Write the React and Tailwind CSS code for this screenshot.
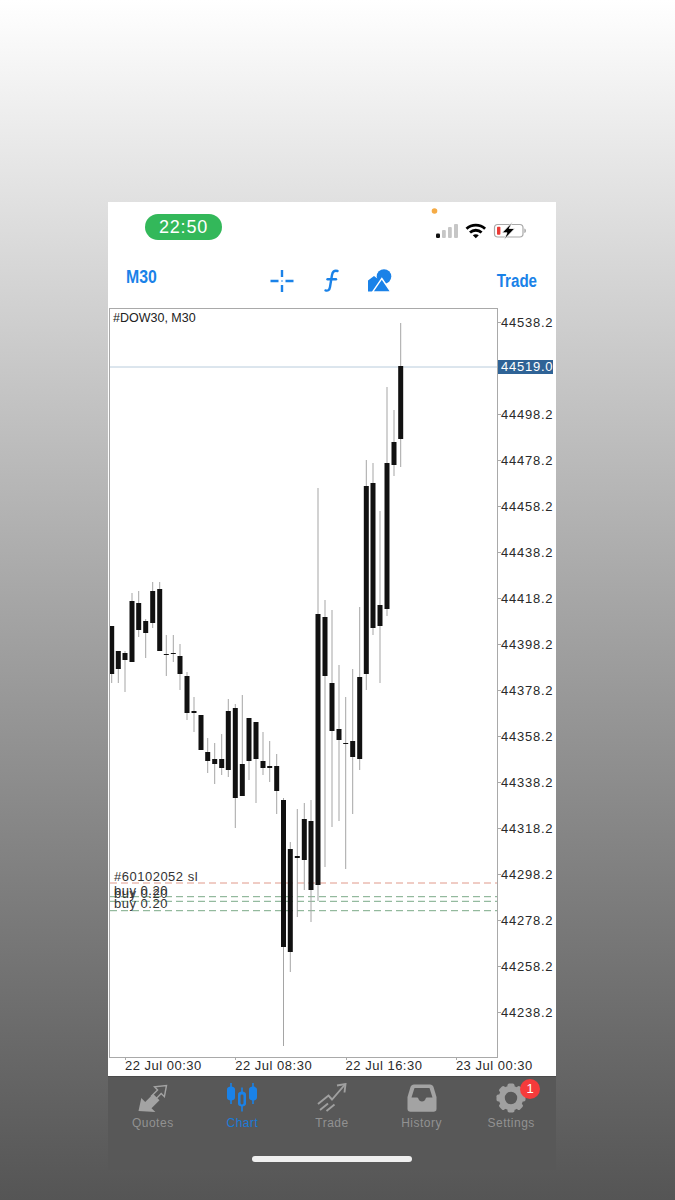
const candles = [
  [111.7, 626, 626, 674, 683],
  [118.3, 651, 651, 669, 683],
  [125, 651, 653, 660, 692],
  [132, 593, 601, 662, 662],
  [138.7, 591, 603, 630, 637],
  [145.7, 619, 621, 633, 658],
  [152.7, 582, 591, 623, 628],
  [159.7, 582, 589, 651, 651],
  [166.3, 635, 654, 655, 676],
  [173.3, 635, 653, 653.5, 662],
  [180, 644, 656, 674, 690],
  [187, 672, 676, 713, 720],
  [194, 697, 711, 713, 732],
  [201, 715, 715, 750, 750],
  [207.7, 738, 752, 761, 773],
  [214.7, 743, 759, 764, 784],
  [221.7, 734, 759, 768, 775],
  [228.3, 699, 711, 770, 777],
  [235.3, 704, 708, 798, 828],
  [242.3, 695, 764, 796, 796],
  [249, 718, 718, 761, 780],
  [256, 722, 722, 759, 803],
  [263, 732, 761, 768, 775],
  [269.7, 741, 766, 768, 782],
  [276.7, 754, 766, 791, 814],
  [283.5, 798, 800, 947, 1046],
  [290.3, 842, 849, 952, 972],
  [297.3, 809, 856, 858, 917],
  [304.3, 803, 819, 860, 890],
  [311, 800, 821, 890, 922],
  [318, 488, 614, 885, 901],
  [325, 600, 617, 676, 867],
  [332, 610, 683, 731, 827],
  [339, 665, 729, 740, 821],
  [345.7, 697, 743, 743.5, 869],
  [352.7, 669, 741, 757, 814],
  [359.7, 607, 677, 759, 770],
  [366.3, 460, 486, 674, 690],
  [373, 463, 483, 628, 635],
  [380, 511, 605, 626, 683],
  [387, 387, 463, 609, 616],
  [394, 410, 442, 465, 476],
  [400.7, 323, 366, 439, 467],
];

const prices = ["44538.2", "", "44498.2", "44478.2", "44458.2", "44438.2", "44418.2", "44398.2", "44378.2", "44358.2", "44338.2", "44318.2", "44298.2", "44278.2", "44258.2", "44238.2"];
const dates = ["22 Jul 00:30", "22 Jul 08:30", "22 Jul 16:30", "23 Jul 00:30"];
const levels = [
  [883, "#e0998a"],
  [896.7, "#7aa987"],
  [901.3, "#7aa987"],
  [910.7, "#7aa987"],
];

function StatusIcons() {
  return (
    <svg width="110" height="36" viewBox="0 0 110 36">
      <circle cx="9.500" cy="6" r="2.800" fill="#f5ab45" />
      <rect x="11" y="28.500" width="4" height="4.500" rx="1.200" fill="#111" />
      <rect x="17" y="25" width="3.800" height="8" rx="1" fill="#c6c6c6" />
      <rect x="23" y="22" width="3.800" height="11" rx="1" fill="#c6c6c6" />
      <rect x="29" y="19" width="4" height="14" rx="1" fill="#c6c6c6" />
      <g fill="none" stroke="#000" strokeWidth="2.800">
        <path d="M41.500 23.800c5.200-4.800 13.400-4.800 18.600 0" />
        <path d="M45 27.500c3.300-3 8.300-3 11.600 0" />
      </g>
      <path d="M47.800 30.300l3 2.900 3-2.900c-1.700-1.500-4.300-1.500-6 0z" fill="#000" />
      <rect x="69.500" y="19.500" width="28.500" height="12.500" rx="3.200" fill="none" stroke="#a8a8a8" strokeWidth="1.200" />
      <rect x="72" y="21.800" width="3.400" height="8" rx="0.800" fill="#ea3b36" />
      <path d="M99.500 23.500v4.500c.8-.3 1.200-1.100 1.200-2.200s-.4-2-1.200-2.300z" fill="#888" />
      <path d="M87.500 17l-10.500 10.800h5l-2.800 6.700 10.600-11h-5.600z" fill="#000" stroke="#fff" strokeWidth="0.800" />
    </svg>
  );
}

function ToolIcons() {
  return (
    <div className="flex items-center gap-[25px]">
      <svg width="24" height="24" viewBox="0 0 24 24" fill="none" stroke="#1a82e8" strokeWidth="2.400">
        <path d="M0.500 12H8.500M15.500 12H23.500M12 1V8M12 16V23" />
        <path d="M12 11.200V12.800" strokeWidth="1.200" />
      </svg>
      <svg width="24" height="24" viewBox="0 0 24 24" fill="none" stroke="#1a82e8" strokeWidth="2.400" strokeLinecap="round">
        <path d="M18.500 2c-3.500-.9-5 .8-5.600 4.500l-1.900 11.500c-.5 3-2.100 4.200-4.500 3.400" />
        <path d="M8.500 10.200h8.500" />
      </svg>
      <svg width="24" height="24" viewBox="0 0 24 24" fill="#1a82e8">
        <path d="M0 11.500l6-4.500 6 4.500v11H0z" />
        <circle cx="16" cy="7.500" r="7.300" />
        <path d="M13.800 9.500l9.200 13.500H4.500z" stroke="#fff" strokeWidth="1.400" />
      </svg>
    </div>
  );
}

function QuotesIcon() {
  return (
    <svg width="30" height="30" viewBox="0 0 30 30">
      <path d="M0.500 28l2.800-13 3.900 3.900 8-8 6.300 6.300-8 8 3.900 3.900z" fill="#a3a3a3" />
      <path d="M28.500 2.500l-2.100 11.200-3.200-3.100-6.100 6.100-3.600-3.600 6.100-6.100-3.100-3.200z" fill="none" stroke="#a3a3a3" strokeWidth="1.400" />
    </svg>
  );
}

function ChartIcon() {
  return (
    <svg width="30" height="30" viewBox="0 0 30 30" fill="#1a82e8">
      <path d="M3.200 0h1.600v3.600c2 .4 3.200 1.300 3.200 3v8c0 1.700-1.200 2.600-3.200 3V21H3.200v-3.400c-2-.4-3.200-1.300-3.200-3v-8c0-1.700 1.200-2.600 3.200-3z" />
      <path d="M14.200 4.500h1.600v4c2 .4 3.200 1.300 3.200 3v9c0 1.700-1.200 2.600-3.200 3v5h-1.600v-5c-2-.4-3.200-1.300-3.200-3v-9c0-1.700 1.200-2.600 3.200-3z" />
      <rect x="13.500" y="11.500" width="3" height="10" rx="1.400" fill="#585858" />
      <path d="M25.200 0h1.600v3.600c2 .4 3.200 1.300 3.200 3v8c0 1.700-1.200 2.600-3.200 3V21h-1.600v-3.400c-2-.4-3.200-1.300-3.200-3v-8c0-1.700 1.200-2.600 3.200-3z" />
    </svg>
  );
}

function TradeIcon() {
  return (
    <svg width="30" height="30" viewBox="0 0 30 30" fill="none" stroke="#a0a0a0" strokeWidth="1.900">
      <path d="M1 21l10.500-8.500 3.500 4L28 1.500" />
      <path d="M20 2.500l8.500-1.500-1 8.500" />
      <path d="M3 27l8-6.500M9.500 28l8-6.500" />
    </svg>
  );
}

function HistoryIcon() {
  return (
    <svg width="30" height="30" viewBox="0 0 30 30">
      <path d="M7 1.500h16c1.700 0 3 1 3.500 2.600L29.500 14v12c0 1.700-1.200 2.800-3 2.800h-23c-1.800 0-3-1.100-3-2.800V14l3-9.900C4 2.500 5.300 1.500 7 1.500z" fill="#a3a3a3" />
      <path d="M7.500 5h15l3 9.500h-5.300c-1 0-1.400.6-1.700 1.400-.5 1.400-1.600 2.500-3.500 2.500s-3-1.100-3.500-2.500c-.3-.8-.7-1.400-1.700-1.400H4.500z" fill="#585858" />
    </svg>
  );
}

function SettingsIcon() {
  const teeth = [0, 45, 90, 135, 180, 225, 270, 315];
  return (
    <svg width="30" height="30" viewBox="0 0 30 30">
      {teeth.map((a) => (
        <rect key={a} x="11.500" y="0.500" width="7" height="7" rx="1.800" fill="#a0a0a0" transform={`rotate(${a} 15 15)`} />
      ))}
      <circle cx="15" cy="15" r="9.200" fill="none" stroke="#a0a0a0" strokeWidth="6" />
    </svg>
  );
}

function Tab({ icon, label, active, children }) {
  return (
    <div className="relative flex flex-1 flex-col items-center pt-[6px]">
      <div className="relative h-[30px] w-[30px]">
        {icon}
        {children}
      </div>
      <span className={`mt-[2px] text-[12px] leading-[16px] tracking-[0.5px] ${active ? "text-[#1a7bd8]" : "text-[#929292]"}`}>{label}</span>
    </div>
  );
}

export default function App() {
  return (
    <div
      className="h-[1200px] w-[675px] overflow-hidden bg-gradient-to-b from-[#ffffff] to-[#555555] pl-[108px] pt-[202px]"
      style={{ fontFamily: '"Liberation Sans", Arial, sans-serif' }}
    >
      <div className="flex h-[968px] w-[448px] flex-col bg-white">
        <div className="flex h-[48px] shrink-0 items-start justify-between pl-[37px] pr-[21px]">
          <div className="mt-[12px] flex h-[26px] w-[77px] items-center justify-center rounded-full bg-[#33b85a] text-[18px] tracking-[0.8px] text-white">22:50</div>
          <div className="mt-[3px]">
            <StatusIcons />
          </div>
        </div>

        <div className="flex h-[58px] shrink-0 items-center justify-between pl-[18px] pr-[19px]">
          <span className="mb-[5px] origin-left scale-x-[0.88] text-[18px] font-bold leading-[20px] text-[#1a82e8]">M30</span>
          <div className="ml-[13px] mt-[3px]">
            <ToolIcons />
          </div>
          <span className="origin-right scale-x-[0.84] pt-[3px] text-[18px] font-bold leading-[20px] text-[#1a82e8]">Trade</span>
        </div>

        <div className="flex h-[750px] shrink-0 pl-px">
          <div className="relative h-[750px] w-[389px] shrink-0 overflow-hidden border border-[#a9a9a9]">
            <svg width="387" height="748" viewBox="110 309 387 748" className="block">
              <line x1="110" x2="497" y1="367" y2="367" stroke="#b9ccdc" strokeWidth="1" />
              {levels.map(([y, c]) => (
                <line key={y} x1="110" x2="497" y1={y} y2={y} stroke={c} strokeWidth="1" strokeDasharray="7 4" />
              ))}
              {candles.map(([x, wt, bt, bb, wb]) => (
                <g key={x}>
                  <line x1={x} x2={x} y1={wt} y2={wb} stroke="#a5a5a5" strokeWidth="1" />
                  <rect x={x - 2.500} y={bt} width="5" height={Math.max(bb - bt, 1)} fill="#111111" />
                </g>
              ))}
            </svg>
            <span className="absolute left-[3px] top-[2px] text-[12.500px] leading-[15px] text-[#222]">#DOW30, M30</span>
            <span className="absolute left-[4px] top-[560px] text-[13px] leading-[15px] tracking-[0.5px] text-[#333]">#60102052 sl</span>
            <span className="absolute left-[4px] top-[574px] text-[13px] leading-[15px] tracking-[0.5px] text-[#333]">buy 0.20</span>
            <span className="absolute left-[4px] top-[577px] text-[13px] leading-[15px] tracking-[0.5px] text-[#333]">buy 0.20</span>
            <span className="absolute left-[4px] top-[587px] text-[13px] leading-[15px] tracking-[0.5px] text-[#333]">buy 0.20</span>
          </div>
          <div className="relative flex-1 pt-[6px]">
            {prices.map((p, i) => (
              <div key={i} className="flex h-[46px] items-start">
                <span className="mt-[8px] h-px w-[3px] bg-[#a9a9a9]" />
                <span className="pt-px text-[13px] leading-[16px] tracking-[0.75px] text-[#2a2a2a]">{p}</span>
              </div>
            ))}
            <div className="absolute left-0 top-[52px] flex h-[14px] w-[55px] items-center bg-[#2f6396] pl-[3px] text-[13px] leading-[14px] tracking-[0.75px] text-white">44519.0</div>
          </div>
        </div>

        <div className="flex h-[18px] shrink-0 pl-[17px]">
          {dates.map((d) => (
            <span key={d} className="relative w-[110.300px] shrink-0 text-[13px] leading-[16px] tracking-[0.5px] text-[#2a2a2a]">
              {d}
              <i className="absolute left-0 top-0 h-[2px] w-px bg-[#a9a9a9]" />
            </span>
          ))}
        </div>

        <div className="flex h-[94px] shrink-0 flex-col border-t border-[#4a4a4a] bg-[#585858]">
          <div className="flex h-[72px]">
            <Tab icon={<QuotesIcon />} label="Quotes" />
            <Tab icon={<ChartIcon />} label="Chart" active />
            <Tab icon={<TradeIcon />} label="Trade" />
            <Tab icon={<HistoryIcon />} label="History" />
            <Tab icon={<SettingsIcon />} label="Settings">
              <span className="absolute left-[24px] top-[-4px] flex h-[20px] w-[20px] items-center justify-center rounded-full bg-[#f53b3b] text-[13px] text-white">1</span>
            </Tab>
          </div>
          <div className="mx-auto mt-[7px] h-[6px] w-[160px] rounded-full bg-[#efefef]" />
        </div>
      </div>
    </div>
  );
}
